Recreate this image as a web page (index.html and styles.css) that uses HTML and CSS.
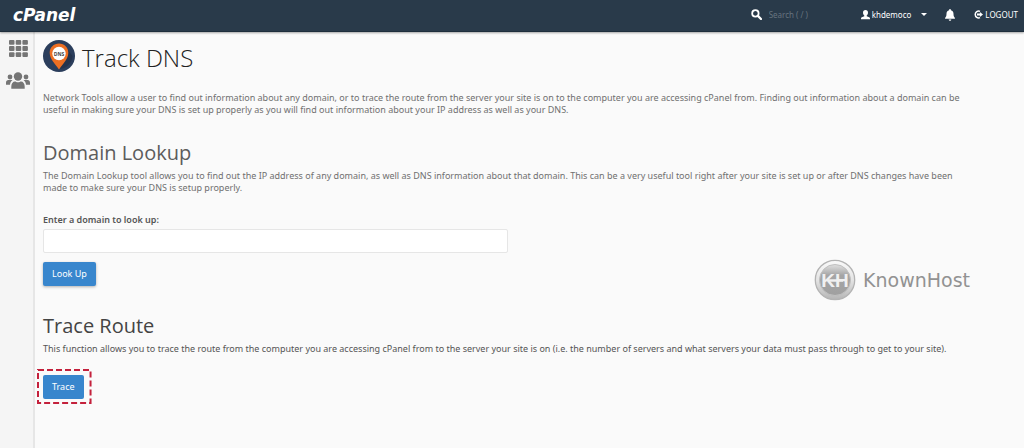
FILE: index.html
```html
<!DOCTYPE html>
<html lang="en">
<head>
  <meta charset="UTF-8" />
  <meta name="viewport" content="width=device-width, initial-scale=1.0" />
  <title>cPanel - Track DNS</title>
  <link rel="stylesheet" href="styles.css">
</head>
<body>
  <header class="topbar">
    <a class="brand" href="#">cPanel</a>
    <div class="search">
      <svg width="11" height="11" viewBox="0 0 11 11"><circle cx="4.4" cy="4.4" r="3.2" fill="none" stroke="#fff" stroke-width="1.8"/><path d="M6.9 6.9L10 10" stroke="#fff" stroke-width="2.2" stroke-linecap="round"/></svg>
      <input type="text" aria-label="Search" placeholder="Search ( / )">
    </div>
    <a class="user" href="#">
      <svg width="9" height="10" viewBox="0 0 9 10"><path d="M4.5 0C6.1 0 7 1.1 7 2.7c0 1.2-.5 2.2-1.3 2.8v.8L8.2 7.3c.6.3.8.7.8 1.3v.7H0v-.7c0-.6.2-1 .8-1.3l2.5-1v-.8C2.5 4.9 2 3.9 2 2.7 2 1.1 2.9 0 4.5 0z" fill="#fff"/></svg>
      <span>khdemoco</span>
      <svg class="caret" width="6" height="3" viewBox="0 0 6 3"><path d="M0 0h6L3 3z" fill="#fff"/></svg>
    </a>
    <a class="bell" href="#" aria-label="Notifications">
      <svg width="10" height="12" viewBox="0 0 10 12"><path d="M5 0c.5 0 .9.3.9.8v.4C7.6 1.6 8.5 3 8.5 4.7c0 2.4.5 3.2 1.3 4 .4.5.1 1.1-.5 1.1H.7c-.6 0-.9-.6-.5-1.1.8-.8 1.3-1.6 1.3-4C1.5 3 2.4 1.6 4.1 1.2V.8c0-.5.4-.8.9-.8zM3.7 10.4h2.6c0 .8-.6 1.3-1.3 1.3s-1.3-.5-1.3-1.3z" fill="#fff"/></svg>
    </a>
    <a class="logout" href="#">
      <svg width="9" height="9" viewBox="0 0 9 9"><path d="M6 1.4A3.4 3.4 0 1 0 6 7.6" fill="none" stroke="#fff" stroke-width="1.5"/><path d="M3 3.6h2.9V1.9L9 4.5 5.9 7.1V5.4H3z" fill="#fff"/></svg>
      <span>LOGOUT</span>
    </a>
  </header>

  <div class="layout">
    <nav class="sidebar">
      <a href="#" aria-label="Tools">
        <svg width="19" height="17" viewBox="0 0 19 17" fill="#757575">
          <rect x="0" y="0" width="5.5" height="4.8" rx="1"/><rect x="6.7" y="0" width="5.5" height="4.8" rx="1"/><rect x="13.4" y="0" width="5.5" height="4.8" rx="1"/>
          <rect x="0" y="6.1" width="5.5" height="4.8" rx="1"/><rect x="6.7" y="6.1" width="5.5" height="4.8" rx="1"/><rect x="13.4" y="6.1" width="5.5" height="4.8" rx="1"/>
          <rect x="0" y="12.2" width="5.5" height="4.8" rx="1"/><rect x="6.7" y="12.2" width="5.5" height="4.8" rx="1"/><rect x="13.4" y="12.2" width="5.5" height="4.8" rx="1"/>
        </svg>
      </a>
      <a href="#" aria-label="User Manager">
        <svg width="24" height="17" viewBox="0 0 24 17" fill="#757575">
          <circle cx="12" cy="4.5" r="4.2"/>
          <path d="M5.3 16.7v-2.2c0-3 1.6-5 3.7-5 .8 0 1.5.8 3 .8s2.2-.8 3-.8c2.1 0 3.700 2 3.700 5v2.200z"/>
          <circle cx="4" cy="5" r="2.4"/><circle cx="20" cy="5" r="2.4"/>
          <path d="M0 12.7v-2C0 9 1 8 2.3 8h4.2C5 9.2 4.2 10.9 4 12.7zM24 12.7v-2C24 9 23 8 21.7 8h-4.2c1.5 1.2 2.3 2.9 2.5 4.7z"/>
        </svg>
      </a>
    </nav>

    <main class="content">
      <h1>
        <svg width="32" height="32" viewBox="0 0 32 32">
          <circle cx="16" cy="16" r="16" fill="#2b3e5c"/>
          <path d="M22 6l7.5 10A14 14 0 0 1 17 29z" fill="#24334d"/>
          <path d="M16 3.5c-5.3 0-9.3 4-9.3 9.2C6.7 19 12 23.5 16 29.5c4-6 9.3-10.5 9.3-16.8 0-5.2-4-9.2-9.3-9.2z" fill="#ed6f23"/>
          <circle cx="16" cy="13.5" r="6.7" fill="#fff"/>
          <text class="pin-text" x="16" y="15.5" text-anchor="middle">DNS</text>
        </svg>
        <span>Track DNS</span>
      </h1>
      <p class="intro muted">Network Tools allow a user to find out information about any domain, or to trace the route from the server your site is on to the computer you are accessing cPanel from. Finding out information about a domain can be useful in making sure your DNS is set up properly as you will find out information about your IP address as well as your DNS.</p>

      <section class="lookup">
        <h2>Domain Lookup</h2>
        <p class="muted">The Domain Lookup tool allows you to find out the IP address of any domain, as well as DNS information about that domain. This can be a very useful tool right after your site is set up or after DNS changes have been made to make sure your DNS is setup properly.</p>
        <form>
          <label for="domain">Enter a domain to look up:</label>
          <input type="text" id="domain">
          <button class="btn btn-shadow" type="button">Look Up</button>
        </form>
      </section>

      <section class="trace">
        <h2>Trace Route</h2>
        <p>This function allows you to trace the route from the computer you are accessing cPanel from to the server your site is on (i.e. the number of servers and what servers your data must pass through to get to your site).</p>
        <div class="highlight">
          <button class="btn" type="button">Trace</button>
          <svg class="marker" aria-hidden="true"><rect width="100%" height="100%"/></svg>
        </div>
      </section>

      <!-- watermark -->
      <div class="watermark">
        <svg width="42" height="42" viewBox="0 0 42 42">
          <defs>
            <linearGradient id="ring" x1="0" y1="0" x2="0" y2="1"><stop offset="0" stop-color="#fafafa"/><stop offset=".5" stop-color="#e4e4e4"/><stop offset="1" stop-color="#b5b5b5"/></linearGradient>
            <linearGradient id="disc" x1="0" y1="0" x2="0" y2="1"><stop offset="0" stop-color="#e0e0e0"/><stop offset=".35" stop-color="#a5a5a5"/><stop offset="1" stop-color="#a0a0a0"/></linearGradient>
          </defs>
          <circle cx="21" cy="21" r="19.7" fill="url(#ring)" stroke="#b3b3b3" stroke-width="1.3"/>
          <circle cx="21" cy="21" r="15.500" fill="url(#disc)" stroke="#c0c0c0"/>
          <path d="M14 21.500h15" stroke="#f0f0f0" stroke-width="2.500"/>
          <text class="mono" x="21" y="28" text-anchor="middle">KH</text>
        </svg>
        <span>KnownHost</span>
      </div>
    </main>
  </div>
</body>
</html>
```

FILE: styles.css
```css
* {
  box-sizing: border-box;
  margin: 0;
  padding: 0;
}
body {
  font-family: "Noto Sans", "Open Sans", sans-serif;
  font-size: 9px;
  line-height: 12px;
  background: #fafafa;
  color: #555;
  display: flex;
  flex-direction: column;
  min-height: 100vh;
}
a {
  color: #fff;
  text-decoration: none;
}
svg {
  display: block;
  flex: none;
}
.topbar {
  background: #293a4a;
  height: 32px;
  padding: 0 6px 2px 13px;
  display: flex;
  align-items: center;
  border-bottom: 1px solid #1f2e3c;
  box-shadow: 0 1px 2px rgba(0, 0, 0, 0.35);
  position: relative;
  font-size: 8px;
}
.brand {
  font-family: "DejaVu Sans", sans-serif;
  font-size: 17px;
  line-height: 20px;
  font-weight: bold;
  font-style: italic;
  margin-right: auto;
}
.search {
  display: flex;
  align-items: center;
  gap: 7px;
  margin-right: 18px;
}
.search input {
  width: 74px;
  border: none;
  background: none;
  color: #fff;
  font-family: inherit;
  font-size: 8px;
}
.search input::placeholder {
  color: #66737f;
}
.user,
.logout {
  display: flex;
  align-items: center;
  gap: 2px;
}
.caret {
  margin-left: 8px;
}
.bell {
  margin: 0 19px 0 18px;
}
.layout {
  display: flex;
  flex: 1;
}
.sidebar {
  width: 35px;
  background: #f5f5f5;
  border-right: 2px solid #e6e6e6;
  padding: 8px 0 0 3px;
  display: flex;
  flex-direction: column;
  align-items: center;
  gap: 15px;
  flex: none;
}
.content {
  flex: 1;
  padding: 8px 56px 40px 8px;
  position: relative;
}
h1,
h2 {
  font-family: "Open Sans", "Noto Sans", sans-serif;
}
h1 {
  display: flex;
  align-items: center;
  gap: 7px;
  font-size: 24px;
  line-height: 36px;
  font-weight: 300;
  color: #222;
}
h1 svg {
  margin-bottom: 4px;
}
.pin-text {
  font-size: 5px;
  font-weight: bold;
  fill: #444;
}
h2 {
  font-size: 20px;
  line-height: 28px;
  font-weight: 400;
  color: #444;
}
.muted {
  color: #707070;
}
.intro {
  margin-top: 16px;
}
.lookup {
  margin-top: 23px;
}
.lookup h2 {
  color: #5c5c5c;
}
.lookup p,
.trace p {
  margin-top: 3px;
}
form {
  display: flex;
  flex-direction: column;
  align-items: flex-start;
  margin-top: 20px;
}
label {
  font-weight: 600;
  color: #555;
}
form input {
  width: 100%;
  max-width: 465px;
  height: 24px;
  margin: 3px 0 9px;
  padding: 0 8px;
  border: 1px solid #e6e6e6;
  border-radius: 2px;
  background: #fff;
  font: inherit;
}
.btn {
  height: 24px;
  padding: 0 9px;
  border: none;
  border-radius: 2px;
  background: #3886cd;
  color: #fff;
  font-family: inherit;
  font-size: 9px;
  line-height: 24px;
}
.btn-shadow {
  box-shadow: 0 1px 3px rgba(0, 0, 0, 0.3);
}
.trace {
  margin-top: 26px;
}
.highlight {
  position: relative;
  display: inline-block;
  margin-top: 20px;
}
.marker {
  position: absolute;
  top: -5px;
  left: -5px;
  width: calc(100% + 12px);
  height: calc(100% + 9px);
  overflow: visible;
  pointer-events: none;
}
.marker rect {
  fill: none;
  stroke: #c4213c;
  stroke-width: 2;
  stroke-dasharray: 6 3;
}
.watermark {
  position: absolute;
  top: 227px;
  right: 54px;
  display: flex;
  align-items: center;
  gap: 7px;
  font-family: "DejaVu Sans", sans-serif;
  font-size: 19px;
  line-height: 20px;
  color: #929292;
}
.mono {
  font-family: "Liberation Sans", Arial, sans-serif;
  font-size: 19px;
  font-weight: bold;
  fill: #f0f0f0;
}
```
